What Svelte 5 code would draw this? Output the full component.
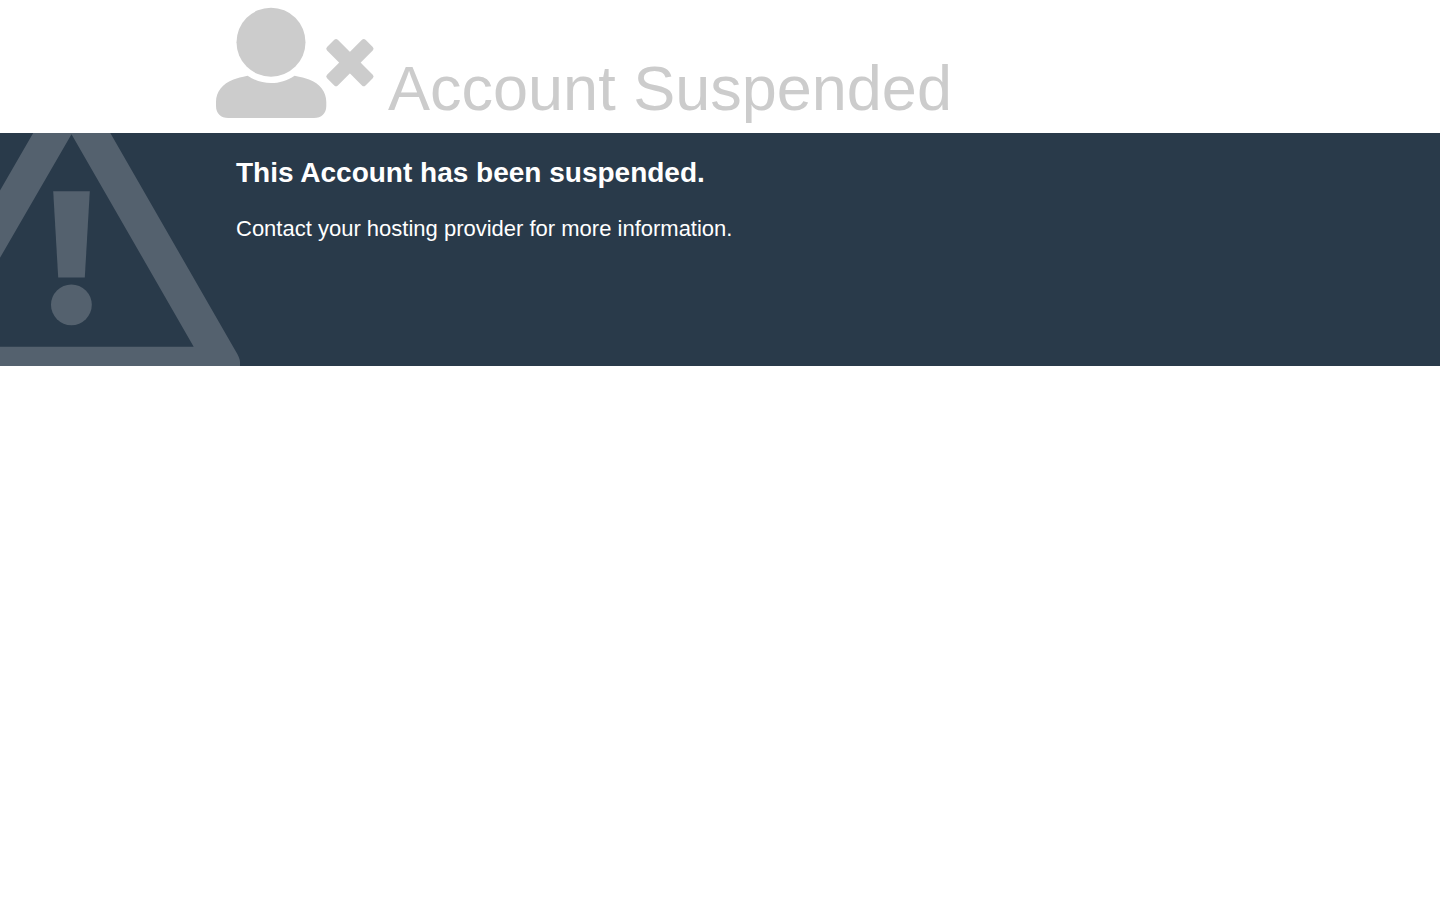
<script>
  const title = "Account Suspended";
  const reason = "This Account has been suspended.";
  const info = "Contact your hosting provider for more information.";
</script>

<svelte:head>
  <title>{title}</title>
</svelte:head>

<header>
  <svg class="user-icon" viewBox="0 0 158 110" aria-hidden="true">
    <circle cx="55" cy="34.2" r="34.5" />
    <path
      d="M31.6 67.7C46 77.5 64 77.5 78.6 67.7C85 69 89 70 93 71.5C104 75.5 110.3 84 110.3 94V98C110.3 105.5 105.5 110 98 110H12.3C4.8 110 0 105.5 0 98V94C0 84 6.5 75.5 17.5 71.5C21.5 70 25.5 69 31.6 67.7Z"
    />
    <g transform="translate(133.9 54.6) rotate(45)">
      <rect x="-27.2" y="-7.6" width="54.4" height="15.2" rx="2.5" />
      <rect x="-7.6" y="-27.2" width="15.2" height="54.4" rx="2.5" />
    </g>
  </svg>
  <h1>{title}</h1>
</header>

<section>
  <svg class="warning-icon" viewBox="0 0 240 233" aria-hidden="true">
    <path
      fill-rule="evenodd"
      d="M33.2 0H110.3L235 217Q240 225 240 229V233H0V213.7H193.7L71.5 1.2L0 124.8V57.5Z"
    />
    <path d="M53.2 58.3H89.8L84.8 144.5H58.2Z" />
    <circle cx="71.4" cy="171.8" r="20.4" />
  </svg>
  <h2>{reason}</h2>
  <p>{info}</p>
</section>

<style>
  :global(body) {
    margin: 0;
    background: #ffffff;
    font-family: Arial, "Liberation Sans", Helvetica, sans-serif;
  }

  header {
    display: flex;
    align-items: flex-end;
    gap: 14px;
    padding: 8px 15% 15px;
    color: #cccccc;
  }

  .user-icon {
    flex: none;
    width: 158px;
    height: 110px;
    overflow: visible;
    fill: currentColor;
  }

  h1 {
    margin: 0;
    font-size: 63px;
    font-weight: normal;
    line-height: 60px;
  }

  section {
    position: relative;
    box-sizing: border-box;
    min-height: 233px;
    padding: 20px calc(15% + 20px);
    background: #293a4a;
    color: #ffffff;
  }

  /* sits behind the message, cut off at the left edge */
  .warning-icon {
    position: absolute;
    top: 0;
    left: 0;
    width: 240px;
    height: 233px;
    fill: #54616e;
  }

  h2,
  p {
    position: relative;
    margin: 0;
  }

  h2 {
    font-size: 28px;
    line-height: 40px;
  }

  p {
    margin-top: 20px;
    font-size: 22px;
    line-height: 32px;
  }
</style>
